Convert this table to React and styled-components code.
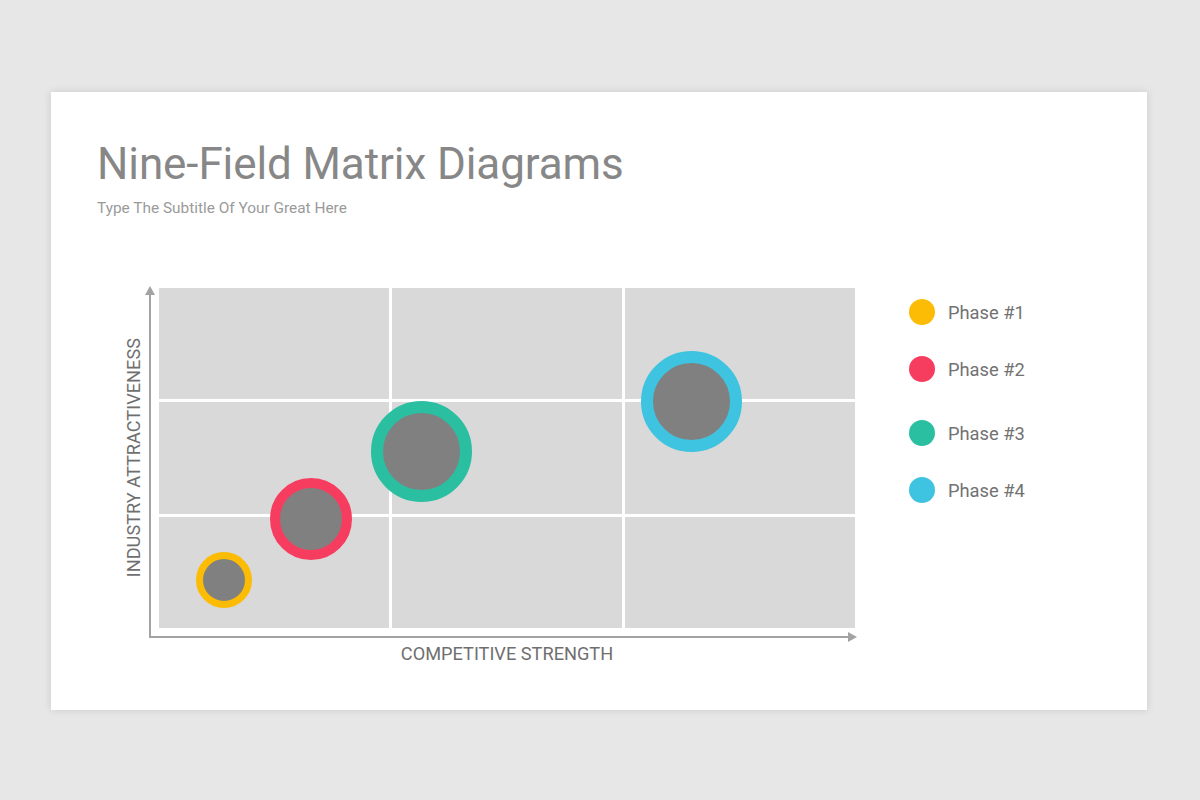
import styled, { createGlobalStyle } from "styled-components";

// ── Global ─────────────────────────────────────────────────────

const Global = createGlobalStyle`
   html, body {
      margin: 0;
      padding: 0;
      background: #e8e7e8;
      font-family: Roboto, "Liberation Sans", sans-serif;
   }
`;

// ── Styled ─────────────────────────────────────────────────────

const Page = styled.div`
   width: 1200px;
   height: 800px;
   padding: 92px 53px 0 51px;
   box-sizing: border-box;
`;

const Card = styled.section`
   height: 618px;
   background: #ffffff;
   box-shadow: 0 0 8px rgba(0, 0, 0, 0.12);
   padding: 47px 46px 0 46px;
   box-sizing: border-box;
   display: flex;
   flex-direction: column;
`;

const Title = styled.h1`
   margin: 0;
   font-size: 44px;
   font-weight: 400;
   line-height: 50px;
   color: #878787;
   letter-spacing: -0.1px;
`;

const Subtitle = styled.p`
   margin: 9px 0 0 0;
   font-size: 15.4px;
   line-height: 20px;
   color: #9a9a9a;
`;

const ChartRow = styled.div`
   display: flex;
   align-items: flex-start;
   margin-top: 70px;
`;

const YLabelCol = styled.div`
   width: 24px;
   height: 340px;
   margin-left: 24px;
   display: flex;
   align-items: center;
   justify-content: center;
`;

const YLabel = styled.span`
   writing-mode: vertical-rl;
   transform: rotate(180deg);
   font-size: 18.2px;
   color: #6f6f6f;
   white-space: nowrap;
`;

const PlotCol = styled.div`
   display: flex;
   flex-direction: column;
   margin-left: 4px;
`;

const Axes = styled.div`
   position: relative;
   width: 696px;
   padding: 0 0 8px 8px;
   border-left: 2px solid #a3a3a3;
   border-bottom: 2px solid #a3a3a3;

   &::before {
      content: "";
      position: absolute;
      left: -6px;
      top: -2px;
      border-left: 5px solid transparent;
      border-right: 5px solid transparent;
      border-bottom: 9px solid #a3a3a3;
   }

   &::after {
      content: "";
      position: absolute;
      right: -2px;
      bottom: -6px;
      border-top: 5px solid transparent;
      border-bottom: 5px solid transparent;
      border-left: 9px solid #a3a3a3;
   }
`;

const Grid = styled.div`
   position: relative;
   width: 696px;
   height: 340px;
   display: grid;
   grid-template-columns: repeat(3, 1fr);
   grid-template-rows: repeat(3, 1fr);
   gap: 3px;
   background: #ffffff;
`;

const Cell = styled.div`
   background: #d9d9d9;
`;

const Bubble = styled.div`
   position: absolute;
   width: ${({ $size }) => $size}px;
   height: ${({ $size }) => $size}px;
   margin: ${({ $size }) => -$size / 2}px 0 0 ${({ $size }) => -$size / 2}px;
   border-radius: 50%;
   box-sizing: border-box;
   border: ${({ $ring }) => $ring}px solid ${({ $color }) => $color};
   background: #808080;
`;

const XLabel = styled.div`
   padding-left: 10px;
   margin-top: 5px;
   text-align: center;
   font-size: 18.2px;
   line-height: 21px;
   color: #6f6f6f;
`;

const Legend = styled.ul`
   list-style: none;
   margin: 11px 0 0 54px;
   padding: 0;
   display: flex;
   flex-direction: column;
`;

const LegendItem = styled.li`
   display: flex;
   align-items: center;
   height: 26px;
   margin-top: ${({ $gap }) => $gap}px;
   gap: 13px;
   font-size: 18.3px;
   color: #727272;
`;

const Dot = styled.span`
   width: 26px;
   height: 26px;
   border-radius: 50%;
   background: ${({ $color }) => $color};
   flex-shrink: 0;
`;

// ── Data ───────────────────────────────────────────────────────

const PHASES = [
   { label: "Phase #1", color: "#fcbc05", x: 65, y: 292, size: 56, ring: 7, gap: 0 },
   { label: "Phase #2", color: "#f73d5f", x: 152, y: 231, size: 82, ring: 10, gap: 31 },
   { label: "Phase #3", color: "#2bbfa2", x: 262, y: 163, size: 101, ring: 12, gap: 38 },
   { label: "Phase #4", color: "#3ec4e0", x: 532, y: 113, size: 101, ring: 12, gap: 31 },
];

// ── Component ─────────────────────────────────────────────────

const App = () => {
   return (
      <Page>
         <Global />
         <Card>
            <Title>Nine-Field Matrix Diagrams</Title>
            <Subtitle>Type The Subtitle Of Your Great Here</Subtitle>

            <ChartRow>
               <YLabelCol>
                  <YLabel>INDUSTRY ATTRACTIVENESS</YLabel>
               </YLabelCol>

               <PlotCol>
                  <Axes>
                     <Grid>
                        {Array.from({ length: 9 }).map((_, i) => (
                           <Cell key={i} />
                        ))}
                        {PHASES.map((p) => (
                           <Bubble
                              key={p.label}
                              $size={p.size}
                              $ring={p.ring}
                              $color={p.color}
                              style={{ left: p.x, top: p.y }}
                           />
                        ))}
                     </Grid>
                  </Axes>
                  <XLabel>COMPETITIVE STRENGTH</XLabel>
               </PlotCol>

               <Legend>
                  {PHASES.map((p) => (
                     <LegendItem key={p.label} $gap={p.gap}>
                        <Dot $color={p.color} />
                        {p.label}
                     </LegendItem>
                  ))}
               </Legend>
            </ChartRow>
         </Card>
      </Page>
   );
};

export default App;
